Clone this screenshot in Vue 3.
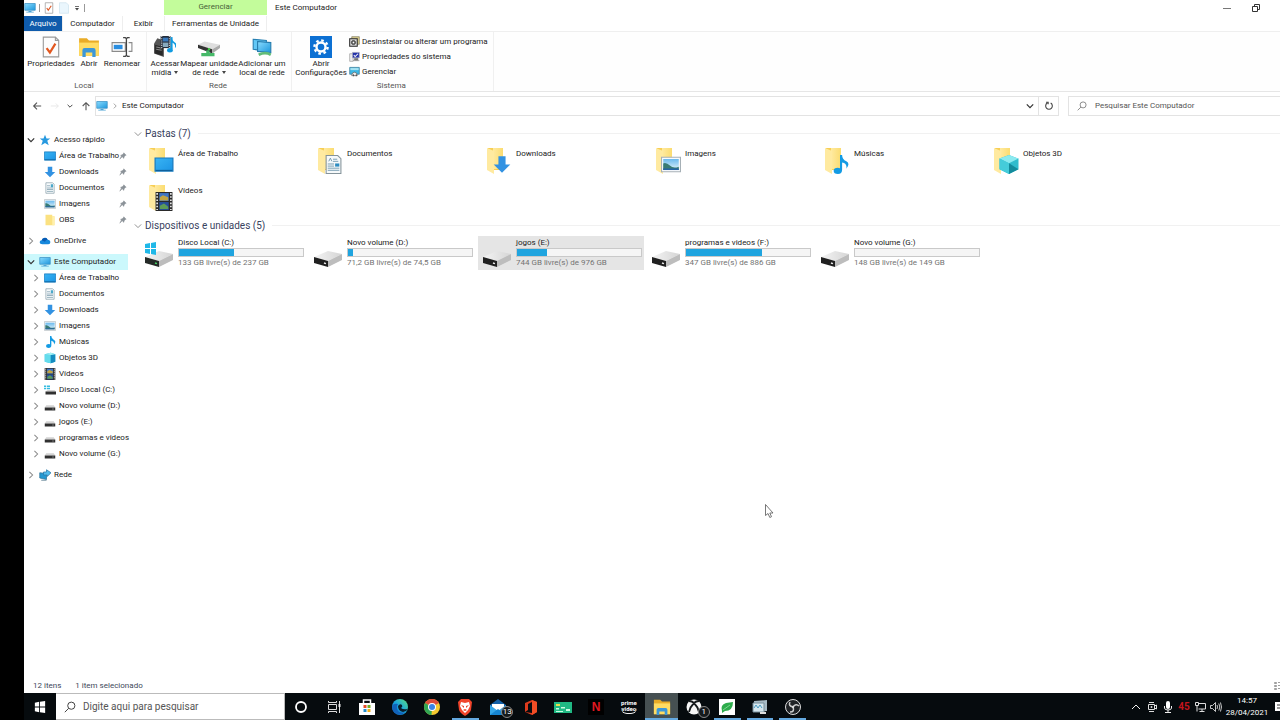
<script setup>
const tabs = ['Computador', 'Exibir']

const ribbonGroups = [
  {
    name: 'Local',
    buttons: [
      { icon: 'props', lines: ['Propriedades'], size: 'w48' },
      { icon: 'explorer', lines: ['Abrir'], size: 'w28' },
      { icon: 'rename', lines: ['Renomear'], size: 'w38' },
    ],
  },
  {
    name: 'Rede',
    buttons: [
      { icon: 'media', lines: ['Acessar', 'mídia'], size: 'w30', menu: true },
      { icon: 'mapdrive', lines: ['Mapear unidade', 'de rede'], size: 'w58', menu: true },
      { icon: 'netplace', lines: ['Adicionar um', 'local de rede'], size: 'w48' },
    ],
  },
  {
    name: 'Sistema',
    buttons: [{ icon: 'settings', lines: ['Abrir', 'Configurações'], size: 'w52' }],
    list: [
      { icon: 'uninstall', label: 'Desinstalar ou alterar um programa' },
      { icon: 'sysprops', label: 'Propriedades do sistema' },
      { icon: 'manage', label: 'Gerenciar' },
    ],
  },
]

const tree = [
  {
    label: 'Acesso rápido', icon: 'star', open: true,
    children: [
      { label: 'Área de Trabalho', icon: 'desktop', pin: true },
      { label: 'Downloads', icon: 'down', pin: true },
      { label: 'Documentos', icon: 'doc', pin: true },
      { label: 'Imagens', icon: 'image', pin: true },
      { label: 'OBS', icon: 'folder', pin: true },
    ],
  },
  { label: 'OneDrive', icon: 'cloud', open: false, children: [] },
  {
    label: 'Este Computador', icon: 'pc', open: true, selected: true,
    children: [
      { label: 'Área de Trabalho', icon: 'desktop' },
      { label: 'Documentos', icon: 'doc' },
      { label: 'Downloads', icon: 'down' },
      { label: 'Imagens', icon: 'image' },
      { label: 'Músicas', icon: 'music' },
      { label: 'Objetos 3D', icon: 'cube' },
      { label: 'Vídeos', icon: 'film' },
      { label: 'Disco Local (C:)', icon: 'minidisk-win' },
      { label: 'Novo volume (D:)', icon: 'minidisk' },
      { label: 'jogos (E:)', icon: 'minidisk' },
      { label: 'programas e videos', icon: 'minidisk' },
      { label: 'Novo volume (G:)', icon: 'minidisk' },
    ],
  },
  { label: 'Rede', icon: 'network', open: false, children: [] },
]

const folders = [
  { name: 'Área de Trabalho', icon: 'desktop' },
  { name: 'Documentos', icon: 'bigdoc' },
  { name: 'Downloads', icon: 'down' },
  { name: 'Imagens', icon: 'image' },
  { name: 'Músicas', icon: 'music' },
  { name: 'Objetos 3D', icon: 'hex' },
  { name: 'Vídeos', icon: 'film' },
]

const drives = [
  { name: 'Disco Local (C:)', free: '133 GB livre(s) de 237 GB', used: 44, icon: 'drive-win' },
  { name: 'Novo volume (D:)', free: '71,2 GB livre(s) de 74,5 GB', used: 4, icon: 'drive' },
  { name: 'jogos (E:)', free: '744 GB livre(s) de 976 GB', used: 24, icon: 'drive', selected: true },
  { name: 'programas e videos (F:)', free: '347 GB livre(s) de 886 GB', used: 61, icon: 'drive' },
  { name: 'Novo volume (G:)', free: '148 GB livre(s) de 149 GB', used: 0, icon: 'drive' },
]

const apps = [
  { name: 'Cortana', icon: 'cortana' },
  { name: 'Visão de Tarefas', icon: 'taskview' },
  { name: 'Microsoft Store', icon: 'store' },
  { name: 'Edge', icon: 'edge' },
  { name: 'Chrome', icon: 'chrome' },
  { name: 'Brave', icon: 'brave', running: true },
  { name: 'Email', icon: 'mail', badge: '13' },
  { name: 'Office', icon: 'office' },
  { name: 'Carteira', icon: 'card' },
  { name: 'Netflix', word: ['N'], look: 'netflix' },
  { name: 'Prime Video', word: ['prime', 'video'], look: 'prime' },
  { name: 'Explorador de Arquivos', icon: 'explorer', running: true, active: true },
  { name: 'Xbox', icon: 'xbox', badge: '1' },
  { name: 'Folha', icon: 'leaf', running: true },
  { name: 'Monitor', icon: 'monitor', running: true },
  { name: 'OBS Studio', icon: 'obs', running: true },
]

const tray = [{ icon: 'up' }, { icon: 'cam' }, { icon: 'mic' }, { text: '45' }, { icon: 'lan' }, { icon: 'sound' }]
</script>

<template>
  <div class="screen">
    <svg class="sprite" aria-hidden="true">
      <defs>
        <linearGradient id="gFolder" x1="0" x2="1"><stop offset="0" stop-color="#ffeaa0" /><stop offset="1" stop-color="#fbdc70" /></linearGradient>
        <linearGradient id="gBlue" x1="0" y1="0" x2="1" y2="1"><stop offset="0" stop-color="#39b4f4" /><stop offset="1" stop-color="#1c94e4" /></linearGradient>
        <linearGradient id="gPc" x1="0" y1="0" x2="1" y2="1"><stop offset="0" stop-color="#8adcff" /><stop offset="1" stop-color="#1c97dc" /></linearGradient>
        <linearGradient id="gDrive" x1="0" x2="1"><stop offset="0" stop-color="#f4f4f4" /><stop offset="1" stop-color="#d5d5d5" /></linearGradient>
        <linearGradient id="gEdge" x1="0" y1="1" x2="1" y2="0"><stop offset="0" stop-color="#0b62c4" /><stop offset=".5" stop-color="#1aa5dc" /><stop offset="1" stop-color="#5fe27a" /></linearGradient>
        <linearGradient id="gSky" x1="0" y1="0" x2="0" y2="1"><stop offset="0" stop-color="#6ab9ed" /><stop offset="1" stop-color="#e4f4fb" /></linearGradient>
      </defs>
      <symbol id="i-pc" viewBox="0 0 16 16"><path d="M1 2h14v9H1z" fill="url(#gPc)" stroke="#3d93c6" /><path d="M6 12h4v1H6zM3 13h10v1H3z" fill="#4ba4d5" /></symbol>
      <symbol id="i-check" viewBox="0 0 16 16"><path d="M3 1h10v14H3z" fill="#fff" stroke="#9b9b9b" /><path d="M5 8l2 3 4-6" fill="none" stroke="#de5a28" stroke-width="1.6" /></symbol>
      <symbol id="i-blank" viewBox="0 0 16 16"><path d="M2 1h9l3 3v11H2z" fill="#eaf6fd" stroke="#cfe3ee" /></symbol>
      <symbol id="i-caret" viewBox="0 0 16 16"><path d="M4 4h8v1.5H4zM4 8h8l-4 5z" fill="#444" /></symbol>
      <symbol id="i-props" viewBox="0 0 20 20"><path d="M3 1h11l3 3v15H3z" fill="#fcfcfc" stroke="#999" /><path d="M14 1v3h3" fill="none" stroke="#999" /><path d="M6 11l3 4 5-8" fill="none" stroke="#e2571f" stroke-width="2" /></symbol>
      <symbol id="i-explorer" viewBox="0 0 20 20"><path d="M1 2h7l2 2h9v14H1z" fill="#e9ac27" /><path d="M1 6h18v12H1z" fill="#ffdc63" /><path d="M4 19v-6q0-2 2-2h8q2 0 2 2v6h-3v-4H7v4z" fill="#3c97d8" /></symbol>
      <symbol id="i-rename" viewBox="0 0 20 20"><path d="M1 6h12v8H1z" fill="#fff" stroke="#8a8a8a" /><path d="M2.500 8h8v4h-8z" fill="#2a8ee0" /><path d="M16 6h3v8h-3" fill="none" stroke="#8a8a8a" /><path d="M11 1.500h2l1 1 1-1h2M14 2.500v15M11 18.500h2l1-1 1 1h2" fill="none" stroke="#444" stroke-width="1.200" /></symbol>
      <symbol id="i-media" viewBox="0 0 20 20"><path d="M0 7l3-5 6 2v15l-9-3z" fill="#555" /><path d="M1 8l7 2v8l-7-2z" fill="#292929" /><path d="M2 10l5 1M2 12l5 1" stroke="#888" /><path d="M6 0h9v11H6z" fill="#252d3b" /><path d="M8 1.500h5v3.500H8z" fill="#3879bd" /><path d="M8 6h5v4H8z" fill="#87a9bd" /><path d="M7 0v11M14 0v11" stroke="#ccc" stroke-dasharray="1 1" /><path d="M16 1v11" stroke="#109be1" stroke-width="1.800" /><ellipse cx="14.500" cy="13" rx="2.600" ry="2" fill="#109be1" /><path d="M16 1q0 3 3 5t0 5q1-4-3-5" fill="#109be1" /></symbol>
      <symbol id="i-mapdrive" viewBox="0 0 20 20"><path d="M0 8l6-3 14 3-7 4z" fill="#dedede" /><path d="M0 8l13 4v4L0 11z" fill="#333" /><path d="M13 12l7-4v3l-7 5z" fill="#aaa" /><path d="M9 11.500l2 .8" stroke="#3cdf45" stroke-width="1.500" /><path d="M3 17h12M9 13v4" stroke="#45b968" stroke-width="3" /></symbol>
      <symbol id="i-netplace" viewBox="0 0 20 20"><path d="M2 3l12 1v10L2 12z" fill="#63c8f6" stroke="#2880b2" /><path d="M6 5l12 1v9L6 14z" fill="url(#gPc)" stroke="#277cad" /><path d="M7 17q6-3 11 0" stroke="#61bc78" stroke-width="2.500" fill="none" /></symbol>
      <symbol id="i-settings" viewBox="0 0 22 22"><path d="M0 0h22v22H0z" fill="#0c70d3" /><circle cx="11" cy="11" r="4.500" fill="none" stroke="#fff" stroke-width="2.400" /><circle cx="11" cy="11" r="6.600" fill="none" stroke="#fff" stroke-width="2.400" stroke-dasharray="2.590 2.590" /></symbol>
      <symbol id="i-uninstall" viewBox="0 0 16 16"><path d="M4 1h11v11H4z" fill="#d9cd8c" stroke="#817c61" /><path d="M1 4h11v11H1z" fill="#dadada" stroke="#292929" stroke-width="1.500" /><circle cx="6.500" cy="9.500" r="3" fill="#777" stroke="#222" /><circle cx="6.500" cy="9.500" r="1" fill="#fff" /></symbol>
      <symbol id="i-sysprops" viewBox="0 0 16 16"><path d="M1 4h5v11H1z" fill="#eee" stroke="#999" /><path d="M5 2h10v8H5z" fill="#2432a8" stroke="#b3b5c1" /><path d="M7 6l2 2 4-4" fill="none" stroke="#fff" stroke-width="1.500" /><path d="M8 11h5v2H8zM6 14h9" fill="#777" stroke="#777" /></symbol>
      <symbol id="i-manage" viewBox="0 0 16 16"><path d="M1 2h14v10H1z" fill="#3cb7e5" stroke="#397793" /><path d="M2 3h12v3H2z" fill="#a5e2f2" /><path d="M4 14q0-5 4-5t4 5z" fill="#eee" stroke="#555" /><path d="M6 12h1v3H6zM10 12h1v3h-1z" fill="#333" /></symbol>
      <symbol id="i-star" viewBox="0 0 16 16"><path d="M8 1l2 5h5l-4 3 2 6-5-3-5 3 2-6-4-3h5z" fill="#2799df" /></symbol>
      <symbol id="i-desktop" viewBox="0 0 16 16"><path d="M.500 2.500h15v11H.500z" fill="url(#gBlue)" stroke="#1679bd" /><path d="M1 13h14" stroke="#0e609c" /></symbol>
      <symbol id="i-down" viewBox="0 0 16 16"><path d="M5 1h6v7h4l-7 7-7-7h4z" fill="#3292e2" /></symbol>
      <symbol id="i-doc" viewBox="0 0 16 16"><path d="M2.500 1h9l2 2v12h-11z" fill="#f7fbfd" stroke="#8da1ab" /><path d="M4 5h4M4 8h8M4 10h8M4 12.500h8" stroke="#7a9aaa" /><path d="M9 3h3v4H9z" fill="#4aa7c9" /></symbol>
      <symbol id="i-bigdoc" viewBox="0 0 16 18"><path d="M1.500.500h11l3 3v14h-14z" fill="#f6f9fa" stroke="#84939a" /><path d="M4 6l1.500-3L7 6M8 4h4M8 6h5M3 8.500h6M3 10.500h6M3 12.500h11M3 14.500h11" fill="none" stroke="#6691a8" stroke-width=".8" /><path d="M10 8h4v3h-4z" fill="#2e8cc0" /></symbol>
      <symbol id="i-image" viewBox="0 0 18 14"><path d="M.500.500h17v13H.500z" fill="#fff" stroke="#a6b0b6" /><path d="M2 2h14v10H2z" fill="url(#gSky)" /><path d="M2 6q3-1 6 2t8 1v3H2z" fill="#397b73" /><path d="M2 10.500h14V12H2z" fill="#2665a4" /></symbol>
      <symbol id="i-music" viewBox="0 0 16 18"><path d="M8 0h2q0 4 4 6t0 7q1-5-4-6v7q0 4-4 4t-4-3 4-3l2 .5z" fill="#139be4" /></symbol>
      <symbol id="i-cube" viewBox="0 0 16 16"><path d="M1 3l8-2 6 2v10l-6 2-8-2z" fill="#25b9df" /><path d="M1 3l8 1v11l-8-2z" fill="#64dcec" /><path d="M9 4l6-1v10l-6 2z" fill="#158bbf" /><path d="M1 3l8-2 6 2-6 1z" fill="#a5f1f4" /></symbol>
      <symbol id="i-hex" viewBox="0 0 16 16"><path d="M8 0l8 3v9l-8 4-8-4V3z" fill="#30bccd" /><path d="M8 0l8 3-8 4-8-4z" fill="#8beaf0" /><path d="M0 3l8 4v9l-8-4z" fill="#45ccda" /><path d="M8 7l8 5-8 4z" fill="#138b9c" /></symbol>
      <symbol id="i-film" viewBox="0 0 16 18"><path d="M0 0h16v18H0z" fill="#2a2a2a" /><path d="M3.500 1h9v7.500h-9z" fill="#3f75c3" /><path d="M3.500 9.500h9V17h-9z" fill="#264f9b" /><path d="M4 5l3-2 5 2v3H4z" fill="#c2a441" /><path d="M4 13l4-2 4 3v2H4z" fill="#5c9b58" /><path d="M1.500 1v16M14.500 1v16" stroke="#f0f0f0" stroke-width="1.500" stroke-dasharray="1.500 1.500" /></symbol>
      <symbol id="i-folder" viewBox="0 0 16 16"><path d="M2 1h9v2h3v12H2z" fill="#fbe181" /><path d="M11 3h3v12h-3z" fill="#fff0ad" /></symbol>
      <symbol id="i-cloud" viewBox="0 0 18 14"><path d="M5 12q-4 0-4-3 0-3 3-3 1-4 5-4 3 0 4 3 4 0 4 4 0 3-3 3z" fill="#1688dc" /><path d="M4 6q1-4 5-4 3 0 4 3-3 0-4 3z" fill="#075ab3" /></symbol>
      <symbol id="i-minidisk" viewBox="0 0 16 16"><path d="M3 7h10l2 3H1z" fill="#d3d3d3" /><path d="M1 10h14v4H1z" fill="#303030" /><path d="M11 12h2" stroke="#aaa" /></symbol>
      <symbol id="i-minidisk-win" viewBox="0 0 16 16"><path d="M5 8h9l2 2H2z" fill="#d3d3d3" /><path d="M2 10h14v4H2z" fill="#303030" /><path d="M0 2h3v2H0zM4 2h4v2H4zM0 5h3v2H0zM4 5h4v2H4z" fill="#35bce0" /></symbol>
      <symbol id="i-network" viewBox="0 0 16 16"><path d="M1 5l9 1v8l-9-2z" fill="#2398d2" stroke="#31769b" /><path d="M6 4h4V1l6 4-5 5V8H6z" fill="#52bced" stroke="#2977a5" /><path d="M3 15h7" stroke="#51758a" /></symbol>
      <symbol id="i-bigfolder" viewBox="0 0 20 28"><path d="M2 1h14v22H2z" fill="#f7ce55" /><path d="M7 1h10v21H7z" fill="url(#gFolder)" /><path d="M1 1l7 3v23l-7-4z" fill="#ffeaa0" /></symbol>
      <symbol id="i-drive" viewBox="0 0 30 28"><path d="M1 18l14-6 14 3-14 7z" fill="url(#gDrive)" /><path d="M1 18l14 4v6L1 24z" fill="#202020" /><path d="M15 22l14-7v6l-14 7z" fill="#bdbdbd" /><path d="M11 24l2 .6" stroke="#eee" stroke-width="1.500" /></symbol>
      <symbol id="i-drive-win" viewBox="0 0 30 28"><path d="M1 18l14-6 14 3-14 7z" fill="url(#gDrive)" /><path d="M1 18l14 4v6L1 24z" fill="#252a27" /><path d="M15 22l14-7v6l-14 7z" fill="#bdbdbd" /><path d="M11 24l2 .6" stroke="#45d465" stroke-width="1.500" /><path d="M1 5l5-1v5H1zM7 4l5-1v6H7zM1 10h5v5l-5-1zM7 10h5v6l-5-1z" fill="#20b8e8" /></symbol>
      <symbol id="i-pin" viewBox="0 0 10 10"><path d="M6 1l3 3-1 .5-1.500 1.500L6 8 4 6 1 9l2-4-1-1 2-.5L5.500 2z" fill="#8b9298" stroke="#8b9298" stroke-width=".6" /></symbol>
      <symbol id="i-right" viewBox="0 0 10 10"><path d="M3 1l4 4-4 4" fill="none" stroke="#8b8b8b" stroke-width="1.300" /></symbol>
      <symbol id="i-open" viewBox="0 0 10 10"><path d="M1 3l4 4 4-4" fill="none" stroke="#333" stroke-width="1.500" /></symbol>
      <symbol id="i-thin" viewBox="0 0 10 10"><path d="M1 3l4 4 4-4" fill="none" stroke="#777" /></symbol>
      <symbol id="i-back" viewBox="0 0 12 12"><path d="M11 6H2M6 2L2 6l4 4" fill="none" stroke="#555" stroke-width="1.300" /></symbol>
      <symbol id="i-fwd" viewBox="0 0 12 12"><path d="M1 6h9M7 3l3 3-3 3" fill="none" stroke="#e3e3e3" /></symbol>
      <symbol id="i-upward" viewBox="0 0 12 12"><path d="M6 11V2M2 6l4-4 4 4" fill="none" stroke="#555" stroke-width="1.300" /></symbol>
      <symbol id="i-refresh" viewBox="0 0 12 12"><path d="M8 2.500a4 4 0 1 1-4 0M2.500 1.500h2.500V4" fill="none" stroke="#444" stroke-width="1.300" /></symbol>
      <symbol id="i-search" viewBox="0 0 12 12"><circle cx="7.300" cy="4.700" r="3.600" fill="none" stroke="currentColor" /><path d="M4.700 7.300L.800 11.200" stroke="currentColor" /></symbol>
      <symbol id="i-min" viewBox="0 0 10 10"><path d="M1 5.500h8" stroke="#777" /></symbol>
      <symbol id="i-restore" viewBox="0 0 10 10"><path d="M1.500 3.500h5v5h-5zM3.500 3V1.500h5v5H7" fill="none" stroke="#333" /></symbol>
      <symbol id="i-details" viewBox="0 0 10 10"><path d="M.500 1.500h2v1h-2zM.500 4.500h2v1h-2zM.500 7.500h2v1h-2zM4 1.500h6M4 4.500h6M4 7.500h6" fill="none" stroke="#888" stroke-width=".8" /></symbol>
      <symbol id="i-win" viewBox="0 0 14 14"><path d="M1 2l5-1v5.500H1zM7 1l6-1v6.500H7zM1 7.500h5V13l-5-1zM7 7.500h6V14l-6-1z" fill="#fff" /></symbol>
      <symbol id="i-cortana" viewBox="0 0 18 18"><circle cx="9" cy="9" r="5" fill="none" stroke="#fff" stroke-width="1.800" /></symbol>
      <symbol id="i-taskview" viewBox="0 0 18 18"><path d="M3.500 3v1.500h8V3M3.500 15v-1.500h8V15M3.500 6.500h8v5h-8zM14.500 3v12" fill="none" stroke="#ddd" /><path d="M13.500 6h2v3h-2z" fill="#eee" /></symbol>
      <symbol id="i-store" viewBox="0 0 18 18"><path d="M5.500 6V2h7v4" fill="none" stroke="#fff" stroke-width="1.500" /><path d="M1 5h16v12H1z" fill="#fff" /><path d="M5.500 7h3v3h-3z" fill="#e94926" /><path d="M9.500 7h3v3h-3z" fill="#75ad24" /><path d="M5.500 11h3v3h-3z" fill="#238dcc" /><path d="M9.500 11h3v3h-3z" fill="#f2ae18" /></symbol>
      <symbol id="i-edge" viewBox="0 0 18 18"><circle cx="9" cy="9" r="8" fill="url(#gEdge)" /><path d="M1 9q1-4 6-3-2 2-1 5 2 5 8 3-3 4-8 2-5-2-5-7" fill="#1262b8" /><path d="M7 8q2-3 4-1 1 2-1 3 2 2 7 1-2 3-5 3-5-1-5-6" fill="#091d2b" /></symbol>
      <symbol id="i-chrome" viewBox="0 0 18 18"><circle cx="9" cy="9" r="8" fill="#f5ca30" /><path d="M9 9L2.070 5a8 8 0 0 1 13.860 0z" fill="#dd4b3b" /><path d="M9 9L2.070 5A8 8 0 0 0 8.500 17z" fill="#31a653" /><circle cx="9" cy="9" r="4" fill="#fff" /><circle cx="9" cy="9" r="3" fill="#3a83e5" /></symbol>
      <symbol id="i-brave" viewBox="0 0 18 18"><path d="M5 1h8l3 3-1 8q-1 3-6 6-5-3-6-6L2 4z" fill="#f0442b" /><path d="M5 4l4 1 4-1 1 4-2 4-3 3-3-3-2-4z" fill="#fff" /><path d="M5 7l3 1v2zM13 7l-3 1v2zM7 12l2-1 2 1-2 1z" fill="#e94028" /></symbol>
      <symbol id="i-mail" viewBox="0 0 18 18"><path d="M1 7l8-6 8 6v9H1z" fill="#1260a7" /><path d="M3 6h12v7H3z" fill="#fff" /><path d="M1 7l8 6 8-6v10H1z" fill="#35a7e8" /><path d="M1 17l8-6 8 6z" fill="#1685d1" /></symbol>
      <symbol id="i-office" viewBox="0 0 18 18"><path d="M10 2l5 2v10l-5 3-7-3 7 1V4L6 6v6l-3 2V5z" fill="#dc3b1d" /><path d="M10 2l5 2v10l-5 3z" fill="#f14d25" /></symbol>
      <symbol id="i-card" viewBox="0 0 18 18"><path d="M0 4h18v11H0z" fill="#20b984" /><path d="M2 6h4v2H2z" fill="#e7df4c" /><path d="M2 10h3v1.500H2zM7 9h4v1.500H7zM12 11h4v2h-4zM2 13h7v1H2z" fill="#c9fbe2" /></symbol>
      <symbol id="i-xbox" viewBox="0 0 18 18"><circle cx="9" cy="9" r="7.500" fill="#f6f6f6" /><path d="M4 3q3 0 5 2 2-2 5-2M9 5q-4 4-5 9M9 5q4 4 5 9" fill="none" stroke="#15191b" stroke-width="1.800" /></symbol>
      <symbol id="i-leaf" viewBox="0 0 18 18"><path d="M1 1h16v16H1z" fill="#fff" /><path d="M4 13q-2-6 4-8l7-1q0 9-8 9l-3 2z" fill="#2eac4c" /><path d="M5 12l7-5" stroke="#7bd88e" /></symbol>
      <symbol id="i-monitor" viewBox="0 0 18 18"><path d="M3 3l13-1v11l-12 1z" fill="#a7bac4" /><path d="M2 5h11v9H2z" fill="#d6e7ee" stroke="#788f9b" /><path d="M3 10l2-3 2 3 2-3 2 3" fill="none" stroke="#4c9ec4" /><path d="M9 14h6v2H9z" fill="#ddd" /></symbol>
      <symbol id="i-obs" viewBox="0 0 18 18"><circle cx="9" cy="9" r="7.500" fill="#202326" stroke="#ddd" /><path d="M9 9q-5-1-3-5M9 9q3-4 6-1M9 9q2 5-3 5" fill="none" stroke="#ccc" stroke-width="1.500" /><circle cx="9" cy="9" r="1.200" fill="#ddd" /></symbol>
      <symbol id="i-up" viewBox="0 0 12 12"><path d="M2 8l4-4 4 4" fill="none" stroke="#eee" /></symbol>
      <symbol id="i-cam" viewBox="0 0 12 12"><path d="M2.500 3.500h6v5h-6zM8.500 5L10.500 4v4L8.500 7M3 1.500h5M3 10.500h5" fill="none" stroke="#ddd" /><circle cx="5.500" cy="6" r="1" fill="#ddd" /></symbol>
      <symbol id="i-mic" viewBox="0 0 12 12"><rect x="4" y="0" width="4" height="8" rx="2" fill="#fff" /><path d="M2.500 5v2q0 2 3.500 2t3.500-2V5M6 9v2.500M3 11.500h6" fill="none" stroke="#eee" /></symbol>
      <symbol id="i-lan" viewBox="0 0 12 12"><path d="M4.500 2.500h7v5.500h-7M8 8v2.500M5.500 10.500h5M1.500 1.500h3v3h-3zM3 4.500v6" fill="none" stroke="#ddd" /></symbol>
      <symbol id="i-sound" viewBox="0 0 12 12"><path d="M.500 4.500h2l3-3v9l-3-3h-2zM7 4q1 2 0 4M8.800 2.500q2 3.500 0 7M10.500 1.500q2 4.500 0 9" fill="none" stroke="#ddd" stroke-width=".9" /></symbol>
      <symbol id="i-note" viewBox="0 0 12 12"><path d="M1 1h11v9H1z" fill="#fff" /><path d="M3 4h8M3 7h8" stroke="#333" /></symbol>
      <symbol id="i-cursor" viewBox="0 0 9 14"><path d="M.500.500v11l2.500-2 1.800 4 1.700-.8-1.700-3.700H8z" fill="#fff" stroke="#555" stroke-width=".8" /></symbol>
    </svg>

    <div class="desk">
      <main class="window">
        <header class="head">
          <div class="quick">
            <svg class="i12"><use href="#i-pc" /></svg><span class="bar"></span>
            <svg class="i12"><use href="#i-check" /></svg>
            <svg class="i12"><use href="#i-blank" /></svg>
            <svg class="i8"><use href="#i-caret" /></svg><span class="bar"></span>
          </div>
          <div class="context">Gerenciar</div>
          <h1 class="title">Este Computador</h1>
          <div class="controls">
            <button aria-label="Minimizar"><svg class="i10"><use href="#i-min" /></svg></button>
            <button aria-label="Restaurar"><svg class="i10"><use href="#i-restore" /></svg></button>
          </div>
        </header>

        <nav class="tabs">
          <button class="tab file">Arquivo</button>
          <button v-for="(t, i) in tabs" :key="t" class="tab" :class="i ? 'narrow' : 'current'">{{ t }}</button>
          <button class="tab tools">Ferramentas de Unidade</button>
        </nav>

        <section class="ribbon">
          <div v-for="g in ribbonGroups" :key="g.name" class="group">
            <div class="group-body">
              <button v-for="b in g.buttons" :key="b.icon" class="big" :class="b.size">
                <svg class="i22"><use :href="'#i-' + b.icon" /></svg>
                <span v-for="(l, i) in b.lines" :key="l">{{ l }}<i v-if="b.menu && i === 1" class="tri"></i></span>
              </button>
              <div v-if="g.list" class="list">
                <button v-for="l in g.list" :key="l.icon" class="small">
                  <svg class="i11"><use :href="'#i-' + l.icon" /></svg>{{ l.label }}
                </button>
              </div>
            </div>
            <div class="group-name">{{ g.name }}</div>
          </div>
        </section>

        <div class="address">
          <div class="nav">
            <button aria-label="Voltar"><svg class="i10"><use href="#i-back" /></svg></button>
            <button aria-label="Avançar"><svg class="i10"><use href="#i-fwd" /></svg></button>
            <button aria-label="Recentes"><svg class="i6"><use href="#i-open" /></svg></button>
            <button aria-label="Acima"><svg class="i10"><use href="#i-upward" /></svg></button>
          </div>
          <div class="path">
            <svg class="i12"><use href="#i-pc" /></svg>
            <svg class="i6"><use href="#i-right" /></svg>
            <span>Este Computador</span>
            <button aria-label="Histórico" class="push"><svg class="i8"><use href="#i-open" /></svg></button>
            <button aria-label="Atualizar" class="refresh"><svg class="i10"><use href="#i-refresh" /></svg></button>
          </div>
          <label class="find">
            <svg class="i10"><use href="#i-search" /></svg>
            <input type="text" placeholder="Pesquisar Este Computador" aria-label="Pesquisar Este Computador" />
          </label>
        </div>

        <div class="body">
          <aside class="tree">
            <div v-for="n in tree" :key="n.label" class="branch">
              <a href="#" class="node" :class="{ chosen: n.selected }">
                <svg class="i8 arrow"><use :href="n.open ? '#i-open' : '#i-right'" /></svg>
                <svg class="i12"><use :href="'#i-' + n.icon" /></svg>
                <span>{{ n.label }}</span>
              </a>
              <a v-for="c in n.children" :key="c.label" href="#" class="node child">
                <svg class="i8 arrow"><use v-if="!c.pin" href="#i-right" /></svg>
                <svg class="i12"><use :href="'#i-' + c.icon" /></svg>
                <span>{{ c.label }}</span>
                <svg v-if="c.pin" class="i8 pin"><use href="#i-pin" /></svg>
              </a>
            </div>
          </aside>

          <div class="content">
            <section>
              <h2 class="section-head"><svg class="i8"><use href="#i-thin" /></svg>Pastas (7)</h2>
              <div class="tiles">
                <div v-for="f in folders" :key="f.name" class="tile">
                  <div class="folder">
                    <svg class="back"><use href="#i-bigfolder" /></svg>
                    <svg class="front"><use :href="'#i-' + f.icon" /></svg>
                  </div>
                  <span class="name">{{ f.name }}</span>
                </div>
              </div>
            </section>
            <section>
              <h2 class="section-head"><svg class="i8"><use href="#i-thin" /></svg>Dispositivos e unidades (5)</h2>
              <div class="tiles">
                <div v-for="d in drives" :key="d.name" class="tile" :class="{ chosen: d.selected }">
                  <svg class="drive"><use :href="'#i-' + d.icon" /></svg>
                  <div class="info">
                    <span>{{ d.name }}</span>
                    <div class="meter"><div class="fill" :style="{ width: d.used + '%' }"></div></div>
                    <span class="free">{{ d.free }}</span>
                  </div>
                </div>
              </div>
            </section>
          </div>
        </div>

        <footer class="status">
          <span>12 itens</span><span>1 item selecionado</span>
          <svg class="i10 view"><use href="#i-details" /></svg>
        </footer>
      </main>

      <div class="taskbar">
        <button class="start" aria-label="Iniciar"><svg class="i12"><use href="#i-win" /></svg></button>
        <label class="ask">
          <svg class="i12"><use href="#i-search" /></svg>
          <input type="text" placeholder="Digite aqui para pesquisar" aria-label="Digite aqui para pesquisar" />
        </label>
        <div class="apps">
          <button v-for="a in apps" :key="a.name" class="app" :class="{ running: a.running, active: a.active }" :aria-label="a.name">
            <svg v-if="a.icon" class="i18"><use :href="'#i-' + a.icon" /></svg>
            <span v-else class="word" :class="a.look"><span v-for="w in a.word" :key="w">{{ w }}</span></span>
            <span v-if="a.badge" class="badge">{{ a.badge }}</span>
          </button>
        </div>
        <div class="tray">
          <template v-for="t in tray" :key="t.icon || t.text">
            <svg v-if="t.icon" class="i12"><use :href="'#i-' + t.icon" /></svg>
            <span v-else class="temp">{{ t.text }}</span>
          </template>
        </div>
        <div class="clock"><span>14:57</span><span>28/04/2021</span></div>
        <div class="note"><svg class="i12"><use href="#i-note" /></svg></div>
      </div>
    </div>
    <svg class="cursor"><use href="#i-cursor" /></svg>
  </div>
</template>

<style>
html, body { margin: 0; background: #000; }
</style>

<style scoped>
* { box-sizing: border-box; }
.screen { position: relative; min-height: 100vh; padding-left: 24px; background: #000; display: flex; font: 8px/10px Roboto, "Open Sans", sans-serif; color: #222; overflow: hidden; }
.sprite { position: absolute; width: 0; height: 0; }
svg { display: block; flex: none; }
button { font: inherit; color: inherit; border: 0; background: none; padding: 0; margin: 0; }
input { font: inherit; color: inherit; border: 0; background: none; padding: 0; flex: 1; min-width: 0; outline: 0; }
input::placeholder { color: #555; opacity: 1; }
a { color: inherit; text-decoration: none; }
h1, h2 { margin: 0; font: inherit; }
.i6 { width: 6px; height: 6px; }
.i8 { width: 8px; height: 8px; }
.i10 { width: 10px; height: 10px; }
.i11 { width: 11px; height: 11px; }
.i12 { width: 12px; height: 12px; }
.i18 { width: 18px; height: 18px; }
.i22 { width: 22px; height: 22px; }

.desk { flex: 1; min-width: 0; display: flex; flex-direction: column; }
.window { flex: 1; display: flex; flex-direction: column; background: #fff; }

.head { display: flex; height: 15px; }
.quick { width: 140px; display: flex; align-items: center; gap: 3px; }
.bar { width: 1px; height: 8px; background: #999; }
.context { width: 103px; background: #c3fc9b; color: #48623a; text-align: center; line-height: 14px; }
.title { margin-left: 8px; line-height: 15px; }
.controls { margin-left: auto; margin-right: 19px; display: flex; gap: 19px; align-items: center; }

.tabs { display: flex; height: 17px; border-bottom: 1px solid #efefef; padding-top: 1px; }
.tab { text-align: center; line-height: 15px; }
.file { width: 38px; background: #0f5bab; color: #fff; }
.current { width: 61px; border: solid #eee; border-width: 0 1px; }
.narrow { width: 41px; }
.tools { width: 103px; border: solid #eee; border-width: 0 1px; }

.ribbon { display: flex; height: 60px; border-bottom: 1px solid #e6e6e6; background: #fefefe; }
.group { display: flex; flex-direction: column; border-right: 1px solid #f0f0f0; padding: 2px 5px 0 3px; }
.group-body { display: flex; flex: 1; }
.group-name { text-align: center; line-height: 10px; color: #555; }
.big { display: flex; flex-direction: column; align-items: center; line-height: 9px; white-space: nowrap; padding-top: 2px; }
.big svg { margin-bottom: 1px; }
.w28 { width: 28px; }
.w30 { width: 30px; }
.w38 { width: 38px; }
.w48 { width: 48px; }
.w52 { width: 52px; }
.w58 { width: 58px; }
.tri { display: inline-block; border: 2px solid transparent; border-top: 3px solid #444; border-bottom: 0; margin: 0 0 1px 3px; }
.list { display: flex; flex-direction: column; padding-left: 2px; }
.small { display: flex; align-items: center; gap: 2px; height: 15px; white-space: nowrap; }

.address { display: flex; height: 20px; margin-top: 4px; }
.nav { width: 71px; display: flex; align-items: center; justify-content: space-between; padding: 0 4px 0 8px; }
.path { flex: 1; display: flex; align-items: center; border: 1px solid #e3e3e3; gap: 4px; }
.push { margin-left: auto; }
.refresh { width: 20px; height: 18px; border-left: 1px solid #e3e3e3; display: flex; align-items: center; justify-content: center; }
.find { width: 212px; margin-left: 9px; border: 1px solid #e3e3e3; border-right: 0; display: flex; align-items: center; gap: 8px; padding-left: 8px; color: #777; }

.body { flex: 1; display: flex; padding-top: 9px; }
.tree { width: 104px; display: flex; flex-direction: column; gap: 5px; padding-top: 7px; }
.node { display: flex; align-items: center; height: 16px; gap: 3px; padding-left: 3px; white-space: nowrap; }
.node .arrow { margin-right: 1px; }
.node span { flex: 1; min-width: 0; }
.child { padding-left: 8px; }
.node.chosen { background: #cbf8fc; }
.pin { margin-right: 1px; }

.content { flex: 1; min-width: 0; padding-left: 6px; display: flex; flex-direction: column; gap: 2px; }
.section-head { display: flex; align-items: center; gap: 3px; height: 17px; font-size: 10px; color: #39425e; }
.section-head::after { content: ""; flex: 1; height: 1px; background: #f1f1f1; margin-left: 4px; }
.tiles { display: grid; grid-template-columns: repeat(auto-fill, 166px); gap: 3px; padding: 2px 0 0 6px; }
.tile { display: flex; height: 34px; padding: 3px 3px 3px 4px; }
.tile.chosen { background: #e5e5e5; }
.folder { position: relative; width: 34px; height: 28px; }
.back { position: absolute; left: 4px; top: 0; width: 20px; height: 28px; }
.front { position: absolute; left: 10px; top: 8px; width: 20px; height: 19px; }
.name { line-height: 14px; }
.drive { width: 30px; height: 28px; margin-right: 4px; }
.info { flex: 1; display: flex; flex-direction: column; margin-right: -1px; line-height: 8px; }
.meter { height: 9px; margin: 1px 0 2px; border: 1px solid #c9c9c9; background: #f5f5f5; }
.fill { height: 100%; background: #1fa4df; }
.free { color: #737373; }

.status { display: flex; height: 14px; align-items: center; gap: 14px; padding-left: 9px; color: #40485a; }
.view { margin-left: auto; margin-right: -4px; }

.taskbar { display: flex; height: 27px; background: #060b0e; color: #fff; }
.start { width: 32px; display: flex; align-items: center; justify-content: center; }
.ask { width: 229px; background: #fff; color: #444; border: 1px solid #bbb; border-left: 0; display: flex; align-items: center; gap: 7px; padding-left: 8px; font-size: 10px; }
.apps { width: 524px; display: grid; grid-template-columns: repeat(16, 1fr); }
.app { position: relative; display: flex; align-items: center; justify-content: center; }
.app.running::after { content: ""; position: absolute; left: 3px; right: 3px; bottom: 0; height: 2px; background: #64a9e0; }
.app.active { background: #465052; }
.app.active::after { left: 0; right: 0; }
.badge { position: absolute; right: 1px; bottom: 2px; width: 12px; height: 12px; border: 1px solid #888; border-radius: 50%; background: #15191b; line-height: 10px; display: flex; justify-content: center; }
.word { display: flex; flex-direction: column; align-items: center; justify-content: center; }
.netflix { width: 16px; height: 16px; background: #000; color: #e01820; font: bold 12px/16px "Liberation Sans", sans-serif; }
.prime { font: bold 6px/6px Roboto, sans-serif; border-bottom: 1px solid #eee; border-radius: 0 0 6px 6px; padding-bottom: 1px; }
.tray { margin-left: auto; display: flex; align-items: center; gap: 4px; }
.temp { width: 12px; font-size: 10px; font-weight: bold; color: #c4141c; text-align: center; }
.clock { width: 50px; display: flex; flex-direction: column; justify-content: center; text-align: center; line-height: 12px; }
.note { width: 8px; overflow: hidden; display: flex; align-items: center; justify-content: flex-start; padding-left: 2px; }
.cursor { position: absolute; left: 765px; top: 504px; width: 9px; height: 14px; }
</style>
